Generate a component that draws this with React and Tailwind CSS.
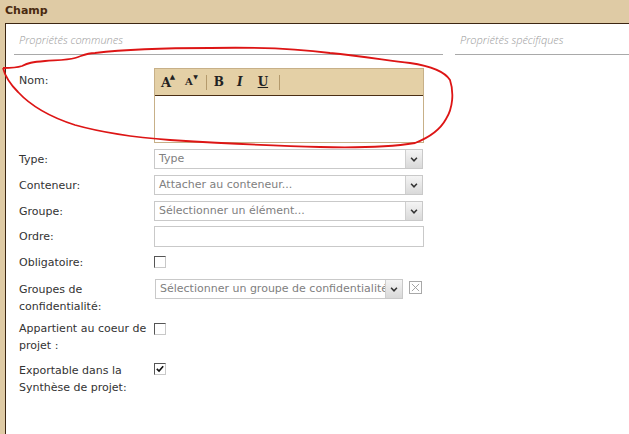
import React from "react";

const font = { fontFamily: '"DejaVu Sans", Verdana, sans-serif' };

function Arrow() {
  return (
    <span className="flex h-full w-[17px] shrink-0 items-center justify-center border-l border-[#cfcfcf] bg-gradient-to-b from-[#f4f4f4] to-[#d9d9d9]">
      <svg viewBox="0 0 8 6" className="h-[5px] w-[8px]" aria-hidden="true">
        <path d="M0.5 0.8 4 4.6 7.5 0.8" fill="none" stroke="#333" strokeWidth="1.8" />
      </svg>
    </span>
  );
}

function Select({ text, className = "w-[269px]" }) {
  return (
    <div className={`flex h-[20px] items-stretch border border-[#c9c9c9] bg-white ${className}`}>
      <span className="min-w-0 flex-1 overflow-hidden whitespace-nowrap pl-[4px] text-[11px] leading-[18px] text-[#808080]">{text}</span>
      <Arrow />
    </div>
  );
}

function Check({ checked }) {
  return (
    <span className="flex h-[12px] w-[12px] items-center justify-center border border-t-[#555] border-l-[#555] border-b-[#c8c8c8] border-r-[#c8c8c8] bg-white">
      {checked ? (
        <svg viewBox="0 0 10 10" className="h-[8px] w-[8px]" aria-hidden="true">
          <path d="M1 4.8 3.8 7.6 9 1.6" fill="none" stroke="#111" strokeWidth="2" />
        </svg>
      ) : null}
    </span>
  );
}

function Label({ children }) {
  return <div className="w-[135px] shrink-0 text-[11px] leading-[17px] text-[#333]">{children}</div>;
}

function Sep() {
  return <span className="mx-[7px] h-[15px] w-px bg-[#b49a6c]" />;
}

export default function App() {
  return (
    <div className="relative flex h-[434px] w-[629px] flex-col overflow-hidden bg-[#dfcba5]" style={font}>
      <div className="h-[23px] pl-[5px] pt-[4px] text-[11px] font-bold leading-[14px] text-[#4a2a10]">Champ</div>
      <div className="ml-[5px] flex flex-1 border-l border-t border-[#3c2612] bg-white">
        <div className="ml-[8px] w-[429px]">
          <div className="h-[31px] border-b border-[#a9a9a9] pl-[5px] pt-[8px] text-[11px] italic leading-[15px] text-[#9a9a9a]" style={{ fontFamily: '"Open Sans", sans-serif', fontWeight: 300 }}>
            Propriétés communes
          </div>
          <div className="pl-[5px] pt-[13px]">
            <div className="flex h-[81px] items-start">
              <div className="pt-[4px]"><Label>Nom:</Label></div>
              <div className="h-[75px] w-[270px] border border-[#c7b088]">
                <div className="flex h-[27px] items-center border-b border-[#4a2e14] bg-[#e4d0a6] pl-[6px] text-[#222]" style={{ fontFamily: '"DejaVu Serif", "Liberation Serif", serif' }}>
                  <span className="relative text-[13px] font-bold leading-none">A<span className="absolute -right-[4px] -top-[3px] text-[7px]">▲</span></span>
                  <span className="relative ml-[14px] text-[10px] font-bold leading-none">A<span className="absolute -right-[5px] -top-[3px] text-[6px]">▼</span></span>
                  <span className="ml-[6px]" />
                  <Sep />
                  <span className="text-[12px] font-bold leading-none">B</span>
                  <span className="ml-[13px] text-[12px] font-bold italic leading-none">I</span>
                  <span className="ml-[15px] text-[12px] font-bold leading-none underline">U</span>
                  <span className="ml-[4px]" />
                  <Sep />
                </div>
              </div>
            </div>
            <div className="flex h-[26px] items-start">
              <div className="pt-[2px]"><Label>Type:</Label></div>
              <Select text="Type" />
            </div>
            <div className="flex h-[26px] items-start">
              <div className="pt-[2px]"><Label>Conteneur:</Label></div>
              <Select text="Attacher au conteneur..." />
            </div>
            <div className="flex h-[25px] items-start">
              <div className="pt-[2px]"><Label>Groupe:</Label></div>
              <Select text="Sélectionner un élément..." />
            </div>
            <div className="flex h-[28px] items-start">
              <div className="pt-[2px]"><Label>Ordre:</Label></div>
              <div className="h-[21px] w-[270px] border border-[#c9c9c9] bg-white" />
            </div>
            <div className="flex h-[25px] items-start">
              <Label>Obligatoire:</Label>
              <div className="pt-[2px]"><Check /></div>
            </div>
            <div className="flex h-[41px] items-start">
              <div className="pt-[2px]"><Label>Groupes de<br />confidentialité:</Label></div>
              <div className="flex items-start pl-px">
                <Select text="Sélectionner un groupe de confidentialité" className="w-[248px]" />
                <span className="ml-[6px] mt-[2px] flex h-[13px] w-[13px] items-center justify-center border border-[#a8a8a8] bg-white">
                  <svg viewBox="0 0 10 10" className="h-[9px] w-[9px]" aria-hidden="true">
                    <path d="M1 1 9 9M9 1 1 9" stroke="#9a9a9a" strokeWidth="1" />
                  </svg>
                </span>
              </div>
            </div>
            <div className="flex h-[40px] items-start">
              <Label>Appartient au coeur de<br />projet :</Label>
              <div className="pt-[3px]"><Check /></div>
            </div>
            <div className="flex h-[40px] items-start">
              <div className="pt-[2px]"><Label>Exportable dans la<br />Synthèse de projet:</Label></div>
              <div className="pt-[3px]"><Check checked /></div>
            </div>
          </div>
        </div>
        <div className="ml-[12px] flex-1">
          <div className="h-[31px] border-b border-[#a9a9a9] pl-[5px] pt-[8px] text-[11px] italic leading-[15px] text-[#9a9a9a]" style={{ fontFamily: '"Open Sans", sans-serif', fontWeight: 300 }}>
            Propriétés spécifiques
          </div>
        </div>
      </div>
      <svg className="pointer-events-none absolute left-0 top-0" width="629" height="434" aria-hidden="true">
        <path
          d="M3,68 C10,68 16,68 22,66 C28,63 32,62 45,61 C60,60 68,60 75,58 C82,56 86,53 95,53 C120,50 160,48 210,48 C260,47 300,49 330,53 C360,56 385,60 410,63 C430,66 445,72 450,80 C454,92 453,108 446,119 C440,130 428,138 415,143 C390,147 360,148 320,147 C270,146 220,143 170,140 C130,137 100,132 75,125 C50,117 30,105 18,92 C10,84 5,76 3,68"
          fill="none"
          stroke="#dd1515"
          strokeWidth="1.8"
          strokeLinejoin="round"
        />
      </svg>
    </div>
  );
}
